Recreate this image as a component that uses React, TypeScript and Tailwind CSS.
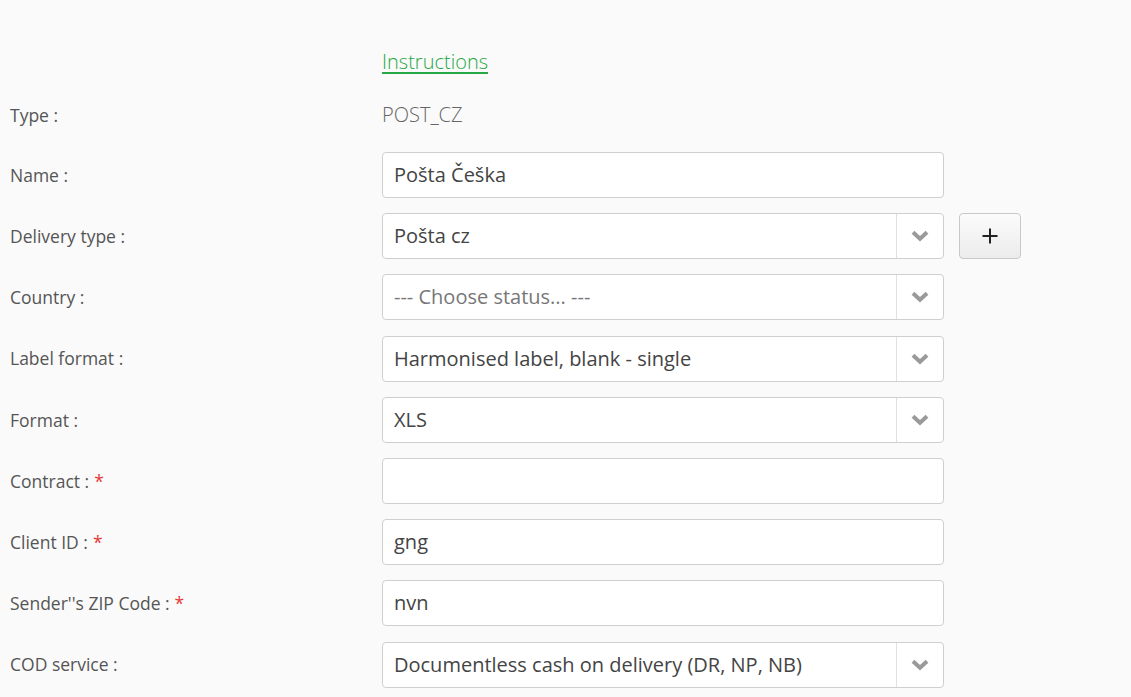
import React from "react";

const font = { fontFamily: '"Open Sans", "Noto Sans", sans-serif' };

function Chevron() {
  return (
    <svg width="18" height="12" viewBox="0 0 18 12">
      <path d="M2 2.2 L9 8.8 L16 2.2" fill="none" stroke="#9a9a9a" strokeWidth="4" strokeLinecap="butt" strokeLinejoin="miter" />
    </svg>
  );
}

function Label({ text, req }: { text: string; req?: boolean }) {
  return (
    <div className="w-[372px] shrink-0 text-[17.5px] text-[#555]">
      {text}
      {req && <span className="text-[#e53935] ml-[5px]">*</span>}
    </div>
  );
}

function TextInput({ value }: { value: string }) {
  return (
    <div className="w-[562px] h-[46px] bg-white border border-[#cfcfcf] rounded-[4px] flex items-center px-[11px] text-[20px] text-[#444]">
      {value}
    </div>
  );
}

function Select({ value, placeholder }: { value: string; placeholder?: boolean }) {
  return (
    <div className="w-[562px] h-[46px] bg-white border border-[#cfcfcf] rounded-[4px] flex items-stretch">
      <div className={`flex-1 flex items-center px-[11px] text-[20px] ${placeholder ? "text-[#777]" : "text-[#444]"}`}>
        {value}
      </div>
      <div className="w-[47px] border-l border-[#e0e0e0] flex items-center justify-center">
        <Chevron />
      </div>
    </div>
  );
}

export default function App() {
  return (
    <div className="min-h-[697px] w-[1131px] bg-[#fafafa] pl-[10px]" style={font}>
      <div className="h-[45px]" />
      <div className="flex h-[34px] items-center">
        <div className="w-[372px] shrink-0" />
        <a className="text-[20px] font-light text-[#27a844] underline underline-offset-[3px]" href="#">
          Instructions
        </a>
      </div>
      <div className="h-[19px]" />
      <div className="flex h-[34px] items-center">
        <Label text="Type :" />
        <div className="text-[20px] font-light text-[#666]">POST_CZ</div>
      </div>
      <div className="h-[20px]" />
      <div className="flex flex-col gap-[15.2px]">
        <div className="flex items-center">
          <Label text="Name :" />
          <TextInput value="Pošta Češka" />
        </div>
        <div className="flex items-center">
          <Label text="Delivery type :" />
          <Select value="Pošta cz" />
          <button className="ml-[15px] w-[62px] h-[46px] rounded-[4px] border border-[#c8c8c8] bg-gradient-to-b from-[#fbfbfb] to-[#ececec] flex items-center justify-center">
            <svg width="18" height="18" viewBox="0 0 18 18">
              <path d="M9 1.5 V16.5 M1.5 9 H16.5" stroke="#222" strokeWidth="2" />
            </svg>
          </button>
        </div>
        <div className="flex items-center">
          <Label text="Country :" />
          <Select value="--- Choose status... ---" placeholder />
        </div>
        <div className="flex items-center">
          <Label text="Label format :" />
          <Select value="Harmonised label, blank - single" />
        </div>
        <div className="flex items-center">
          <Label text="Format :" />
          <Select value="XLS" />
        </div>
        <div className="flex items-center">
          <Label text="Contract :" req />
          <TextInput value="" />
        </div>
        <div className="flex items-center">
          <Label text="Client ID :" req />
          <TextInput value="gng" />
        </div>
        <div className="flex items-center">
          <Label text="Sender''s ZIP Code :" req />
          <TextInput value="nvn" />
        </div>
        <div className="flex items-center">
          <Label text="COD service :" />
          <Select value="Documentless cash on delivery (DR, NP, NB)" />
        </div>
      </div>
    </div>
  );
}
